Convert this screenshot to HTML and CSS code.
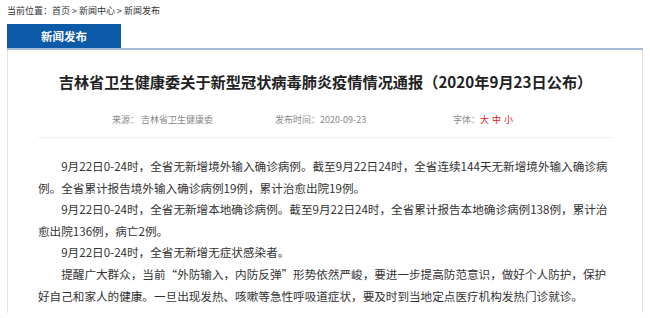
FILE: index.html
```html
<!DOCTYPE html>
<html lang="zh-CN">
<head>
    <meta charset="UTF-8">
    <meta name="viewport" content="width=device-width, initial-scale=1.0">
    <title>新闻发布</title>
    <link rel="stylesheet" href="styles.css">
</head>
<body>
    <div class="crumb">当前位置：首页 &gt; 新闻中心 &gt; 新闻发布</div>

    <div class="tab-bar">
        <div class="tab">新闻发布</div>
    </div>

    <div class="panel">
        <h1 class="news-title">吉林省卫生健康委关于新型冠状病毒肺炎疫情情况通报（2020年9月23日公布）</h1>
        <div class="news-meta">
            <span class="meta-source">来源： 吉林省卫生健康委</span>
            <span class="meta-date">发布时间：2020-09-23</span>
            <span class="meta-font">字体：<a class="size-link">大</a><a class="size-link">中</a><a class="size-link">小</a></span>
        </div>
        <div class="news-body">
            <p>9月22日0-24时，全省无新增境外输入确诊病例。截至9月22日24时，全省连续144天无新增境外输入确诊病例。全省累计报告境外输入确诊病例19例，累计治愈出院19例。</p>
            <p>9月22日0-24时，全省无新增本地确诊病例。截至9月22日24时，全省累计报告本地确诊病例138例，累计治愈出院136例，病亡2例。</p>
            <p>9月22日0-24时，全省无新增无症状感染者。</p>
            <p>提醒广大群众，当前“外防输入，内防反弹”形势依然严峻，要进一步提高防范意识，做好个人防护，保护好自己和家人的健康。一旦出现发热、咳嗽等急性呼吸道症状，要及时到当地定点医疗机构发热门诊就诊。</p>
        </div>
    </div>
</body>
</html>
```

FILE: styles.css
```css
body {
    margin: 0;
    padding: 0;
    background: #fff;
    font-family: "Noto Sans CJK SC", "Noto Sans", sans-serif;
    color: #333;
}
.crumb {
    padding: 5px 7px 0 7px;
    font-size: 9px;
    line-height: 12px;
    color: #333;
}
.tab-bar {
    margin: 7px 7px 0 7px;
    border-bottom: 2px solid #a3bdd8;
    display: flex;
}
.tab {
    width: 114px;
    height: 24px;
    line-height: 24px;
    background: #0c5aa8;
    color: #fff;
    font-size: 11.5px;
    font-weight: bold;
    text-align: center;
}
.panel {
    margin: 0 7px;
    border-left: 1px solid #e4e4e4;
    border-right: 1px solid #e4e4e4;
    padding: 21px 29px 6px 30px;
}
.news-title {
    margin: 0;
    font-size: 15.2px;
    line-height: 20px;
    font-weight: bold;
    color: #222;
    text-align: center;
}
.news-meta {
    margin-top: 23px;
    padding: 0 0 11px 74px;
    border-bottom: 1px solid #f0f0f0;
    display: flex;
    font-size: 9px;
    line-height: 12px;
    color: #8a8a8a;
}
.meta-source { width: 163px; }
.meta-date { width: 178px; }
.size-link {
    color: #e21818;
    margin-right: 3px;
    cursor: pointer;
}
.news-body {
    margin-top: 18px;
    font-size: 11.6px;
    line-height: 21.6px;
    color: #333;
}
.news-body p {
    margin: 0;
    text-indent: 2em;
}
```
